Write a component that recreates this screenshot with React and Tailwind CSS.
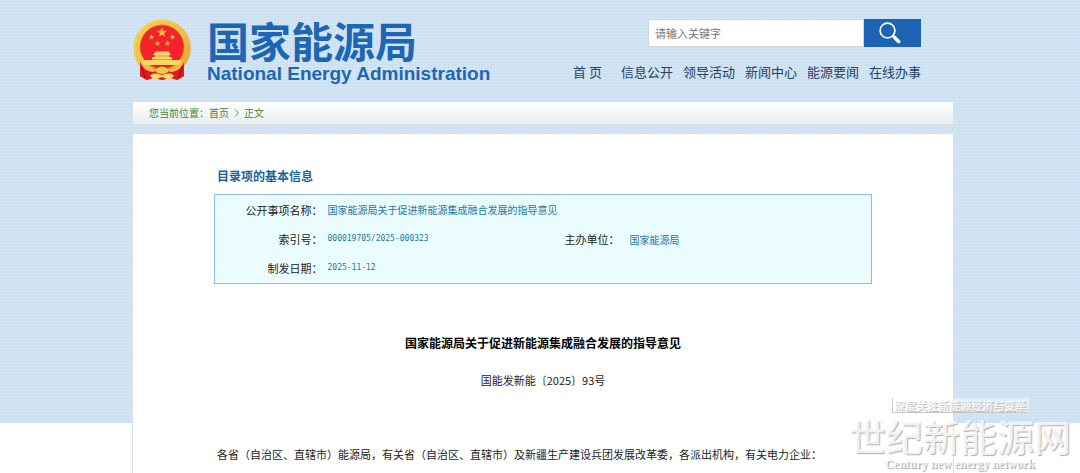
const navItems = ['信息公开', '领导活动', '新闻中心', '能源要闻', '在线办事'];

const star = (cx, cy, r) =>
  Array.from({ length: 10 }, (_, i) => {
    const a = -Math.PI / 2 + (i * Math.PI) / 5;
    const d = i % 2 ? r * 0.4 : r;
    return `${(cx + d * Math.cos(a)).toFixed(2)},${(cy + d * Math.sin(a)).toFixed(2)}`;
  }).join(' ');

function Emblem() {
  return (
    <svg viewBox="0 0 58 62" className="h-[62px] w-[58px] shrink-0" role="img" aria-label="国徽">
      <defs>
        <linearGradient id="gold" x1="0" y1="0" x2="1" y2="1">
          <stop offset="0" stopColor="#fbd65a" />
          <stop offset="0.5" stopColor="#f3c24a" />
          <stop offset="1" stopColor="#e3a02c" />
        </linearGradient>
      </defs>
      <path d="M7 43 L7 57 L14 61 L20 59 L29 61 L38 59 L44 61 L51 57 L51 43Z" fill="#d3131b" />
      <circle cx="29" cy="29" r="28.8" fill="url(#gold)" />
      <circle cx="29" cy="29" r="25.6" fill="none" stroke="#e2ab40" strokeWidth="0.7" strokeDasharray="2 1.5" />
      <circle cx="29" cy="28" r="22.4" fill="#c98a25" />
      <circle cx="29" cy="28" r="21.6" fill="#f5222c" />
      <polygon points={star(29, 13.5, 5.4)} fill="#f6bd43" />
      <polygon points={star(18.5, 18, 3)} fill="#f6bd43" />
      <polygon points={star(39.5, 18, 3)} fill="#f6bd43" />
      <polygon points={star(24.5, 24.5, 3)} fill="#f6bd43" />
      <polygon points={star(34.5, 24.5, 3)} fill="#f6bd43" />
      <path d="M22.5 32.5 h13 l2.5 3.5 h-2 v2 h3 v3 h10 l-2 5 H11 l-2 -5 h10 v-3 h3 v-2 h-2z" fill="#fbd566" />
      <path d="M21 37 H37 M19 40.5 H39" stroke="#e8802c" strokeWidth="0.7" />
      <path d="M7 43 C13 51 19 51 24 49 C26 45 32 45 34 49 C39 51 45 51 51 43 L51 57 L44 61 L38 58 L29 60 L20 58 L14 61 L7 57Z" fill="#e01a20" />
      <path d="M7 42 C14 50 20 51 24 49 L21 53 C14 53 9 49 7 42Z M51 42 C44 50 38 51 34 49 L37 53 C44 53 49 49 51 42Z" fill="#f2c048" />
      <path d="M22 52 C24 46 34 46 36 52 C33 56 25 56 22 52Z" fill="#f5c84e" />
      <path d="M17 57 C20 53 25 55 29 56 C33 55 38 53 41 57 L36 61 L29 58 L22 61Z" fill="#fbd668" />
      <path d="M9 47 L12 59 M49 47 L46 59" stroke="#a80d16" strokeWidth="1.2" />
    </svg>
  );
}

function SearchIcon() {
  return (
    <svg viewBox="0 0 22 22" className="h-[22px] w-[22px]" aria-hidden="true">
      <circle cx="8.5" cy="8.5" r="7.4" fill="none" stroke="#fff" strokeWidth="1.7" />
      <path d="M13.8 13.8 L15.4 15.4" stroke="#fff" strokeWidth="2" />
      <path d="M15.6 15.4 L19.6 19.4" stroke="#fff" strokeWidth="3.6" strokeLinecap="round" />
    </svg>
  );
}

function Header() {
  return (
    <header className="flex h-[101px] items-start justify-between pr-[33px] pl-px">
      <a href="#" className="flex items-start gap-[16px] pt-[19px] text-[#1d66b5]">
        <Emblem />
        <span className="flex flex-col">
          <span className="text-[42px] leading-[42px] font-bold">国家能源局</span>
          <span className="font-['Liberation_Sans'] text-[19px] leading-[26px] font-bold">National Energy Administration</span>
        </span>
      </a>
      <div className="flex flex-col items-end pt-[19px]">
        <form className="flex h-[28px]" onSubmit={(e) => e.preventDefault()}>
          <input
            type="text"
            aria-label="关键字"
            placeholder="请输入关键字"
            className="w-[216px] border border-[#d5d5d5] bg-white px-[6px] text-[11px] outline-none placeholder:text-[#757575]"
          />
          <button type="submit" aria-label="搜索" className="flex w-[57px] items-center justify-center bg-[#1d63b3] pr-[5px]">
            <SearchIcon />
          </button>
        </form>
        <nav className="flex gap-[10px] pt-[15px] text-[13px] leading-[20px] text-[#1f4468]">
          <a href="#" className="mr-[9px]">首 页</a>
          {navItems.map((t) => (
            <a href="#" key={t}>{t}</a>
          ))}
        </nav>
      </div>
    </header>
  );
}

const labelCls = 'text-right text-[11px] font-normal text-[#222] pr-[5px]';
const valueCls = 'text-[10px] text-[#1a76a8]';
const codeCls = "font-['DejaVu_Sans_Mono'] text-[8px] text-[#1a76a8]";

function InfoTable() {
  return (
    <table className="w-full table-fixed border border-[#8fbcec] bg-[#ebfcff] text-left">
      <colgroup>
        <col className="w-[113px]" />
        <col />
        <col className="w-[86px]" />
        <col className="w-[242px]" />
      </colgroup>
      <tbody>
        <tr className="h-[30px]">
          <th scope="row" className={labelCls}>公开事项名称：</th>
          <td colSpan={3} className={valueCls}>国家能源局关于促进新能源集成融合发展的指导意见</td>
        </tr>
        <tr className="h-[29px]">
          <th scope="row" className={labelCls}>索引号：</th>
          <td className={codeCls}>000019705/2025-000323</td>
          <th scope="row" className="pr-[10px] text-right text-[11px] font-normal text-[#222]">主办单位：</th>
          <td className={valueCls}>国家能源局</td>
        </tr>
        <tr className="h-[30px]">
          <th scope="row" className={labelCls}>制发日期：</th>
          <td className={codeCls}>2025-11-12</td>
          <td colSpan={2} />
        </tr>
      </tbody>
    </table>
  );
}

function Watermark() {
  return (
    <div className="pointer-events-none absolute right-[9px] bottom-[4px] flex flex-col items-center whitespace-nowrap text-white/80" aria-hidden="true">
      <span className="border-b border-l border-[#c8c8c8] bg-white/40 px-[2px] text-[11px] leading-[14px] font-bold [text-shadow:1px_1px_1px_#b4b4b4]">深度关注新能源经济与变革</span>
      <span className="text-[37px] leading-[46px] font-medium [text-shadow:1px_1px_1px_#b0b0b0]">世纪新能源网</span>
      <span className="font-['Liberation_Serif'] text-[12px] leading-[10px] font-bold [text-shadow:1px_1px_1px_#999]">Century new energy network</span>
    </div>
  );
}

export default function App() {
  return (
    <div className="relative grid min-h-screen overflow-hidden bg-white font-['Noto_Sans_CJK_SC',sans-serif]">
      <div className="h-[423px] bg-[#cbe0f1] bg-[linear-gradient(#ffffff20_1px,transparent_1px),linear-gradient(90deg,#ffffff20_1px,transparent_1px)] bg-[size:3px_3px] [grid-area:1/1]" />
      <div className="flex justify-center pl-[6px] [grid-area:1/1]">
        <div className="flex w-full max-w-[822px] flex-col">
          <Header />
          <nav className="mb-[8px] flex h-[24px] items-center border border-[#dcdfe2] bg-linear-to-b from-white to-[#e9edf1] pb-px pl-[16px] text-[10px] text-[#3f8a2c]" aria-label="位置">
            您当前位置：
            <a href="#">首页</a>
            <svg viewBox="0 0 15 8" className="h-[8px] w-[15px]" aria-hidden="true">
              <path d="M6 0.5 L9.5 4 L6 7.5" fill="none" stroke="#3f8a2c" strokeWidth="0.9" />
            </svg>
            <a href="#">正文</a>
          </nav>
          <main className="grow border border-b-0 border-[#dcdfe2] bg-white px-[81px] pt-[32px]">
            <h2 className="mb-[8px] pl-[3px] text-[12px] leading-[20px] font-bold text-[#1d6199]">目录项的基本信息</h2>
            <InfoTable />
            <h1 className="mt-[49px] text-center text-[12px] leading-[20px] font-bold text-black">国家能源局关于促进新能源集成融合发展的指导意见</h1>
            <p className="mt-[18px] text-center text-[11px] leading-[18px] text-[#222]">国能发新能〔2025〕93号</p>
            <p className="mt-[55px] pl-[3px] text-[11px] leading-[20px] text-[#222]">
              各省（自治区、直辖市）能源局，有关省（自治区、直辖市）及新疆生产建设兵团发展改革委，各派出机构，有关电力企业：
            </p>
          </main>
        </div>
      </div>
      <Watermark />
    </div>
  );
}
